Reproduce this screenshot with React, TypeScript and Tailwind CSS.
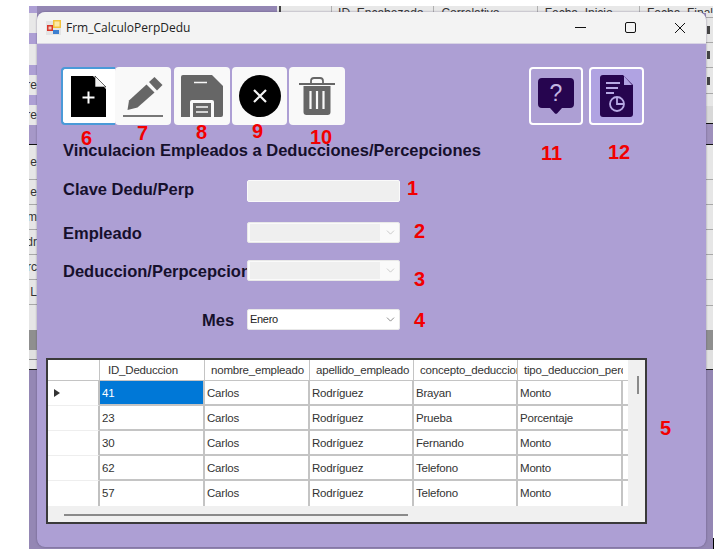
import type { ReactNode } from 'react';
import { ChevronDown } from 'lucide-react';

type Segment = { h: number; bg: string; label?: string; mark?: boolean };

const G = 'bg-[#e6e6e6] border-b border-[#a8a8a8]';
const P = 'bg-[#ad9fd4]';

const leftStrip: Segment[] = [
  { h: 7, bg: P },
  { h: 20, bg: 'bg-[#e8e8e8]' },
  { h: 11, bg: P },
  { h: 21, bg: 'bg-[#e8e8e8]' },
  { h: 10, bg: P },
  { h: 20, bg: 'bg-[#e8e8e8]', label: 're' },
  { h: 10, bg: P },
  { h: 20, bg: 'bg-[#e8e8e8]', label: 're' },
  { h: 19, bg: 'bg-[#a698c8]' },
  { h: 1, bg: 'bg-[#111111]' },
  { h: 35, bg: G, label: 'e' },
  { h: 25, bg: G, label: 'e' },
  { h: 25, bg: G, label: 'm' },
  { h: 25, bg: G, label: 'dr' },
  { h: 25, bg: G, label: 'rc' },
  { h: 25, bg: G, label: 'L' },
  { h: 25, bg: 'bg-[#e6e6e6]' },
  { h: 20, bg: 'bg-[#8f8f8f]' },
  { h: 10, bg: 'bg-[#e0e0e0] border-b border-[#8a8a8a]' },
  { h: 9, bg: 'bg-[#e6e6e6]' },
  { h: 1, bg: 'bg-[#222222]' },
];

const rightStrip: Segment[] = [
  { h: 12, bg: G },
  { h: 25, bg: G, mark: true },
  { h: 25, bg: G, mark: true },
  { h: 26, bg: G, mark: true },
  { h: 12, bg: 'bg-[#e6e6e6]' },
  { h: 17, bg: 'bg-[#d8d8d8]' },
  { h: 1, bg: 'bg-[#111111]' },
  { h: 20, bg: 'bg-[#9e90bc]' },
  { h: 1, bg: 'bg-[#111111]' },
  { h: 35, bg: G },
  { h: 25, bg: G },
  { h: 25, bg: G },
  { h: 25, bg: G },
  { h: 25, bg: G },
  { h: 26, bg: G },
  { h: 24, bg: 'bg-[#e6e6e6]' },
  { h: 20, bg: 'bg-[#8f8f8f]' },
  { h: 19, bg: 'bg-[#e0e0e0]' },
  { h: 1, bg: 'bg-[#222222]' },
];

const rows = [
  ['41', 'Carlos', 'Rodríguez', 'Brayan', 'Monto'],
  ['23', 'Carlos', 'Rodríguez', 'Prueba', 'Porcentaje'],
  ['30', 'Carlos', 'Rodríguez', 'Fernando', 'Monto'],
  ['62', 'Carlos', 'Rodríguez', 'Telefono', 'Monto'],
  ['57', 'Carlos', 'Rodríguez', 'Telefono', 'Monto'],
];

const headers = ['ID_Deduccion', 'nombre_empleado', 'apellido_empleado', 'concepto_deduccion', 'tipo_deduccion_percepcion'];

const Num = ({ n, className }: { n: number; className: string }) => (
  <span className={`absolute font-['Liberation_Sans',sans-serif] text-[20px] leading-none font-bold text-[#f20000] ${className}`}>{n}</span>
);

const Strip = ({ items }: { items: Segment[] }) => (
  <div className="flex flex-col">
    {items.map((s, i) => (
      <div
        key={i}
        style={{ height: s.h }}
        className={`flex items-center justify-end overflow-hidden box-border whitespace-nowrap text-[12px] text-[#333333] ${s.bg}`}
      >
        {s.label}
        {s.mark && <span className="mr-auto ml-[1px] h-[8px] w-[3px] bg-[#444444]" />}
      </div>
    ))}
  </div>
);

const ToolButton = ({ className, children }: { className: string; children: ReactNode }) => (
  <div className={`flex h-[58px] shrink-0 items-center justify-center rounded-[4px] ${className}`}>{children}</div>
);

const Field = ({ label, labelClass, children, className }: { label: string; labelClass?: string; children: ReactNode; className: string }) => (
  <div className={`relative flex items-center ${className}`}>
    <div className={`w-[184px] shrink-0 overflow-hidden whitespace-nowrap text-[16.5px] leading-[20px] font-bold text-[#16102c] ${labelClass ?? ''}`}>{label}</div>
    {children}
  </div>
);

const Combo = ({ value }: { value?: string }) => (
  <div className={`flex h-[21px] w-[153px] items-center rounded-[2px] border border-[#e8e8e8] pl-[2px] ${value ? 'border-[#a0a0a0] bg-white' : 'bg-[#fafafa]'}`}>
    <div className={`flex h-[17px] w-[130px] items-center text-[11px] tracking-[-0.3px] text-[#222222] ${value ? '' : 'bg-[#efefef]'}`}>{value}</div>
    <ChevronDown size={13} strokeWidth={1.25} className={`ml-[4px] ${value ? 'text-[#555555]' : 'text-[#b5b5b5]'}`} />
  </div>
);

export default function App() {
  return (
    <div className="relative h-[558px] w-[726px] overflow-hidden bg-white font-['Liberation_Sans',sans-serif]">
      {/* window behind */}
      <div className="absolute left-[29px] top-[6px] flex h-[543px] w-[684px] justify-between bg-[#9487b4]">
        <div className="w-[8px]"><Strip items={leftStrip} /></div>
        <div className="w-[7px]"><Strip items={rightStrip} /></div>
      </div>
      <div className="absolute left-[277px] top-[6px] flex h-[7px] w-[436px] overflow-hidden bg-[#e8e8e8] pl-[2px] text-[12px] leading-[14px] text-[#333333]">
        <div className="w-[53px] border-l-2 border-[#444444]" />
        <div className="w-[104px] border-l border-[#b0b0b0] pl-[6px]">ID_Encabezado</div>
        <div className="w-[105px] border-l border-[#b0b0b0] pl-[7px]">Correlativo</div>
        <div className="w-[104px] border-l border-[#b0b0b0] pl-[7px]">Fecha_Inicio</div>
        <div className="flex-1 border-l border-[#b0b0b0] pl-[7px] whitespace-nowrap">Fecha_Final</div>
      </div>
      <div className="absolute left-[713px] top-[538px] h-[11px] w-[1px] bg-black" />

      {/* main window */}
      <div className="absolute left-[37px] top-[12px] flex h-[535px] w-[669px] flex-col overflow-hidden rounded-[8px] bg-[#ad9fd4] shadow-[0_0_2px_rgba(60,50,90,0.6)]">
        <div className="flex h-[32px] shrink-0 items-center border-b border-[#d8d4e4] bg-[#f3f3f3] pl-[9px] pr-[21px]">
          <svg width="15" height="15" viewBox="0 0 15 15">
            <rect x="0" y="1" width="15" height="14" fill="#e4e4e4" />
            <rect x="1" y="5" width="6" height="6" fill="#d8352a" />
            <rect x="2.5" y="6.5" width="3" height="3" fill="#f4c7b8" />
            <rect x="7" y="0" width="8" height="8" fill="#f2c23c" />
            <rect x="8.5" y="1.5" width="5" height="5" fill="#fbe9a6" />
            <rect x="7" y="10" width="6" height="4" fill="#3d7fd0" />
          </svg>
          <span className="ml-[5px] font-['Open_Sans',sans-serif] text-[12px] text-[#222222]">Frm_CalculoPerpDedu</span>
          <span className="ml-auto h-[1px] w-[11px] bg-[#111111]" />
          <span className="ml-[39px] h-[11px] w-[11px] rounded-[2px] border border-[#111111]" />
          <svg width="10" height="10" viewBox="0 0 10 10" className="ml-[39px]">
            <path d="M0 0l10 10M10 0L0 10" stroke="#111111" strokeWidth="1" />
          </svg>
        </div>

        <div className="relative flex flex-1 flex-col pl-[24px]">
          {/* toolbar */}
          <div className="mt-[23px] flex h-[58px]">
            <ToolButton className="relative w-[54px] rounded-r-none border-2 border-r-0 border-[#4a9ad8] bg-white">
              <svg width="36" height="43" viewBox="0 0 36 43">
                <path d="M0 1h22l13 13v28H0z" fill="#000" />
                <path d="M24 1l11 11H24z" fill="#f4f4f4" stroke="#000" strokeWidth="0.6" />
                <path d="M17.5 16.5v12M11.5 22.5h12" stroke="#fff" strokeWidth="2" />
              </svg>
              <Num n={6} className="left-[18px] top-[59px]" />
            </ToolButton>
            <ToolButton className="relative w-[56px] bg-[#f9f9f9]">
              <svg width="42" height="42" viewBox="0 0 42 42">
                <path d="M24.5 9.5l8 8-17 15-10 2.500 1.500-9.500z" fill="#666" />
                <path d="M27 7l5.500-5 8 8-5.500 5.500z" fill="#666" />
                <path d="M1 41h40" stroke="#777" strokeWidth="2" />
              </svg>
              <Num n={7} className="left-[22px] top-[56px]" />
            </ToolButton>
            <ToolButton className="relative ml-[3px] w-[56px] bg-[#f9f9f9]">
              <svg width="42" height="42" viewBox="0 0 42 42">
                <path d="M0 2a2 2 0 012-2h29l11 11v29a2 2 0 01-2 2H0z" fill="#666" />
                <path d="M13 7.500h13" stroke="#f9f9f9" strokeWidth="1.500" />
                <path d="M9 42V27a2 2 0 012-2h20a2 2 0 012 2v15" fill="#f9f9f9" />
                <rect x="12" y="28" width="18" height="14" fill="#666" />
                <path d="M15 32h12M15 37h12" stroke="#f9f9f9" strokeWidth="1.500" />
              </svg>
              <Num n={8} className="left-[22px] top-[55px]" />
            </ToolButton>
            <ToolButton className="relative ml-[2px] w-[55px] bg-[#f9f9f9]">
              <svg width="42" height="42" viewBox="0 0 42 42">
                <circle cx="21" cy="21" r="21" fill="#000" />
                <path d="M15 15l12 12M27 15L15 27" stroke="#f4f4f4" strokeWidth="2.200" />
              </svg>
              <Num n={9} className="left-[20px] top-[54px]" />
            </ToolButton>
            <ToolButton className="relative ml-[2px] w-[56px] bg-[#f9f9f9]">
              <svg width="36" height="38" viewBox="0 0 36 38">
                <path d="M0 7h36" stroke="#666" strokeWidth="2" />
                <path d="M12 7V4a3 3 0 013-3h6a3 3 0 013 3v3" fill="none" stroke="#666" strokeWidth="1.800" />
                <path d="M4.500 9h27v26a3 3 0 01-3 3h-21a3 3 0 01-3-3z" fill="#666" />
                <path d="M11.500 14v18M18 14v18M24.500 14v18" stroke="#f9f9f9" strokeWidth="2.200" />
              </svg>
              <Num n={10} className="left-[21px] top-[60px]" />
            </ToolButton>
            <ToolButton className="relative ml-[184px] w-[54px] border-2 border-white bg-transparent">
              <svg width="36" height="36" viewBox="0 0 36 36">
                <path d="M4 0h28a4 4 0 014 4v22a4 4 0 01-4 4h-8l-4.500 5a2 2 0 01-3 0L12 30H4a4 4 0 01-4-4V4a4 4 0 014-4z" fill="#26054f" />
                <text x="18" y="23" textAnchor="middle" fontSize="23" fill="#c2b6e2" fontFamily="Liberation Sans">?</text>
              </svg>
              <Num n={11} className="left-[10px] top-[74px]" />
            </ToolButton>
            <ToolButton className="relative ml-[6px] w-[55px] border-2 border-white bg-[#b0a3e2]">
              <svg width="33" height="42" viewBox="0 0 33 42">
                <path d="M3 0h20l10 10v29a3 3 0 01-3 3H3a3 3 0 01-3-3V3a3 3 0 013-3z" fill="#26054f" />
                <path d="M24 1l8 9h-8z" fill="#b0a3e2" />
                <path d="M6 8h14M6 13h12M6 18h8" stroke="#b7a9e4" strokeWidth="1.800" />
                <circle cx="17" cy="29" r="7" fill="none" stroke="#b7a9e4" strokeWidth="1.800" />
                <path d="M17 22v7h7" fill="none" stroke="#b7a9e4" strokeWidth="1.800" />
              </svg>
              <Num n={12} className="left-[17px] top-[73px]" />
            </ToolButton>
          </div>

          <h1 className="ml-[2px] mt-[16px] whitespace-nowrap text-[16.5px] font-bold leading-[18px] text-[#16102c]">Vinculacion Empleados a Deducciones/Percepciones</h1>

          {/* fields */}
          <div className="ml-[2px] flex flex-col">
            <Field label="Clave Dedu/Perp" labelClass="pb-[4px]" className="mt-[21px] h-[22px]">
              <div className="h-[22px] w-[153px] rounded-[2px] border border-[#fafafa] bg-[#efefef]" />
              <Num n={1} className="left-[344px] -top-[2px]" />
            </Field>
            <Field label="Empleado" className="mt-[20px] h-[21px]">
              <Combo />
              <Num n={2} className="left-[351px] -top-[1px]" />
            </Field>
            <Field label="Deduccion/Perpcepcion" className="mt-[17px] h-[21px]">
              <Combo />
              <Num n={3} className="left-[351px] top-[9px]" />
            </Field>
            <Field label="Mes" labelClass="pl-[139px]" className="mt-[28px] h-[21px]">
              <Combo value="Enero" />
              <Num n={4} className="left-[351px] top-[1px]" />
            </Field>
          </div>

          {/* data grid */}
          <div className="relative -ml-[15px] mt-[28px] flex h-[166px] w-[601px] border-2 border-[#3a3a3a] bg-[#f0f0f0] text-[11.5px] tracking-[-0.2px] text-[#333333]">
            <div className="flex w-[580px] flex-col">
              <div className="grid h-[21px] grid-cols-[52px_105px_105px_104px_104px_105px_5px] border-b border-[#c4c4c4] bg-white">
                <div className="border-r border-[#c4c4c4]" />
                {headers.map((h, i) => (
                  <div key={h} className={`overflow-hidden whitespace-nowrap leading-[20px] ${i < 4 ? 'border-r border-[#c4c4c4]' : ''} ${i === 0 ? 'pl-[8px]' : 'pl-[6px]'}`}>{h}</div>
                ))}
                <div />
              </div>
              {rows.map((r, idx) => (
                <div key={idx} className="grid h-[25px] grid-cols-[52px_105px_105px_104px_104px_105px_5px] bg-white">
                  <div className={`flex items-center border-r-2 border-r-[#c0c0c0] pl-[6px] ${idx < 4 ? 'border-b border-b-[#eeeeee]' : ''}`}>
                    {idx === 0 && <span className="h-0 w-0 border-y-[4px] border-l-[6px] border-y-transparent border-l-[#333333]" />}
                  </div>
                  {r.map((c, j) => (
                    <div
                      key={j}
                      className={`overflow-hidden whitespace-nowrap border-r-2 border-[#c4c4c4] pl-[2px] leading-[24px] ${idx < 4 ? 'border-b-2' : ''} ${idx === 0 && j === 0 ? 'border-r-0 bg-[#0078d7] text-white' : ''}`}
                    >
                      {c}
                    </div>
                  ))}
                  <div className={idx < 4 ? 'border-b-2 border-[#c4c4c4]' : ''} />
                </div>
              ))}
              <div className="flex flex-1 items-center pl-[16px]">
                <div className="mt-[1px] h-[2px] w-[344px] bg-[#8a8a8a]" />
              </div>
            </div>
            <div className="flex-1 pl-[9px] pt-[16px]">
              <div className="h-[18px] w-[2px] bg-[#8a8a8a]" />
            </div>
            <Num n={5} className="left-[612px] top-[58px]" />
          </div>
        </div>
      </div>
    </div>
  );
}
